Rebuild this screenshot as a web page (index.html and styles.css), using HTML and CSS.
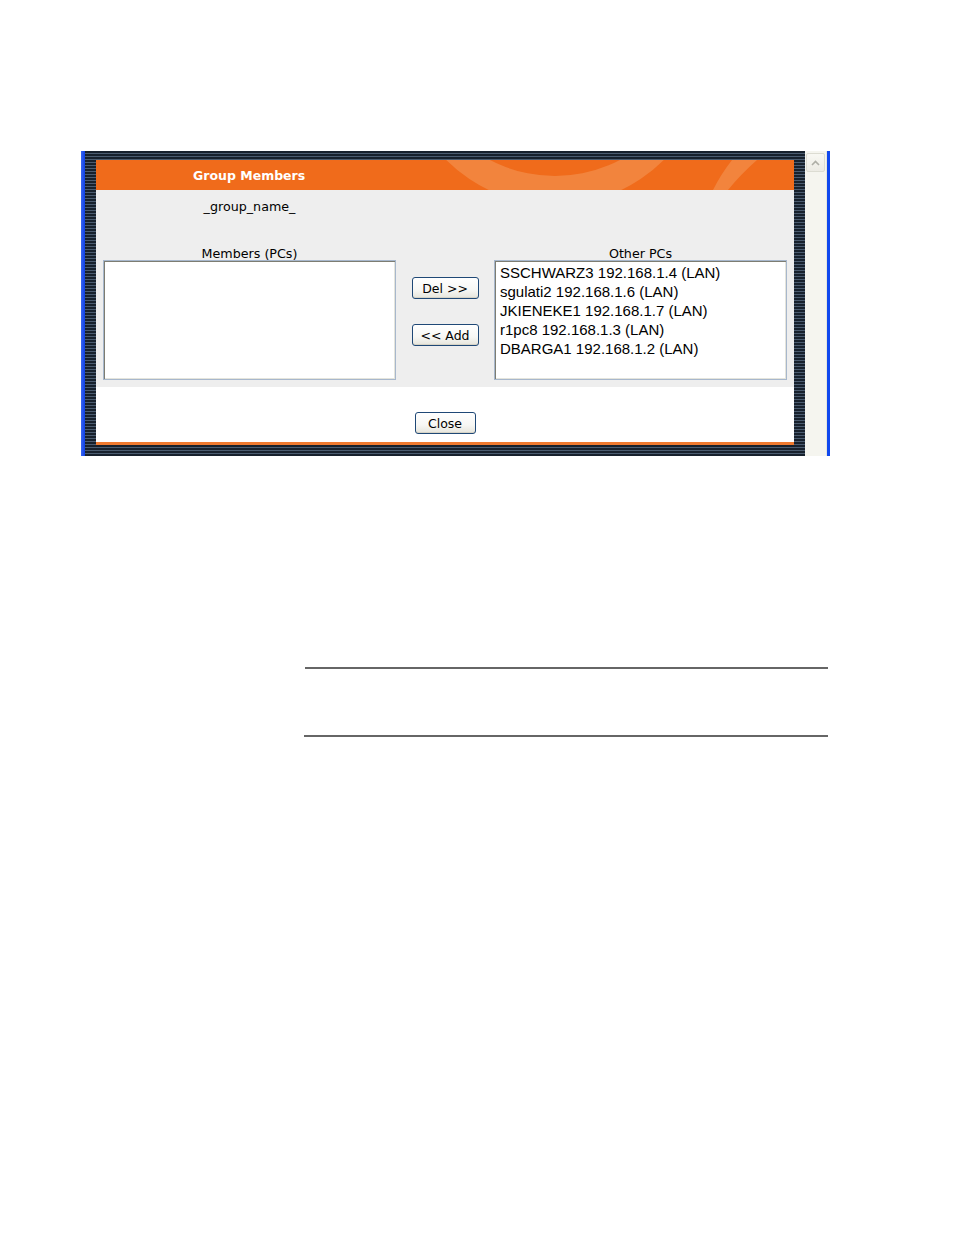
FILE: index.html
```html
<!DOCTYPE html>
<html>
<head>
<meta charset="utf-8">
<link rel="stylesheet" href="styles.css">
</head>
<body>
<div class="shot">
  <div class="blue"></div>
  <div class="stripes">
    <div class="page">
      <div class="header">
        <svg class="deco" width="698" height="30" viewBox="0 0 698 30">
          <path fill="#f2843d" fill-rule="evenodd" d="M305 -109 a154 154 0 1 0 308 0 a154 154 0 1 0 -308 0 Z M319 -124 a140 140 0 1 0 280 0 a140 140 0 1 0 -280 0 Z"/>
          <path fill="#f2843d" d="M636 0 L661 0 Q645 14 632 30 L617 30 Q625 14 636 0 Z"/>
        </svg>
        <span class="title">Group Members</span>
      </div>
      <div class="body">
        <div class="namerow"><div class="col name">_group_name_</div></div>
        <div class="lists">
          <div class="col">
            <div class="label">Members (PCs)</div>
            <div class="listbox"></div>
          </div>
          <div class="mid">
            <button class="btn move">Del &gt;&gt;</button>
            <button class="btn move">&lt;&lt; Add</button>
          </div>
          <div class="col">
            <div class="label">Other PCs</div>
            <div class="listbox">
              <div class="item">SSCHWARZ3 192.168.1.4 (LAN)</div>
              <div class="item">sgulati2 192.168.1.6 (LAN)</div>
              <div class="item">JKIENEKE1 192.168.1.7 (LAN)</div>
              <div class="item">r1pc8 192.168.1.3 (LAN)</div>
              <div class="item">DBARGA1 192.168.1.2 (LAN)</div>
            </div>
          </div>
        </div>
      </div>
      <div class="foot"><button class="btn close">Close</button></div>
      <div class="orange-line"></div>
    </div>
  </div>
  <div class="scrollbar">
    <div class="sb-btn">
      <svg width="9" height="6" viewBox="0 0 9 6"><path d="M1 5 L4.5 1.5 L8 5" fill="none" stroke="#aeaea6" stroke-width="1.6"/></svg>
    </div>
  </div>
  <div class="blue right"></div>
</div>
<div class="rule r1"></div>
<div class="rule r2"></div>
</body>
</html>
```
FILE: styles.css
```css
html, body {
  margin: 0;
  padding: 0;
  background: #ffffff;
}
body {
  width: 954px;
  height: 1235px;
  font-family: "DejaVu Sans", Verdana, sans-serif;
}
.shot {
  display: flex;
  margin: 151px 0 0 81px;
  width: 749px;
  height: 305px;
}
.blue {
  width: 4px;
  background: linear-gradient(to right, #3a66f0, #0c3fe8);
}
.blue.right {
  width: 3px;
  background: #1048ee;
}
.stripes {
  width: 698px;
  padding: 9px 11px 11px 11px;
  background: repeating-linear-gradient(to bottom, #17212d 0px, #17212d 2px, #4b5c70 2px, #4b5c70 3px);
}
.page {
  width: 698px;
  height: 285px;
  display: flex;
  flex-direction: column;
}
.header {
  position: relative;
  height: 30px;
  background: #f06b1b;
  overflow: hidden;
  display: flex;
  align-items: center;
}
.deco {
  position: absolute;
  left: 0;
  top: 0;
}
.title {
  position: relative;
  padding-left: 97px;
  color: #ffffff;
  font-weight: bold;
  font-size: 12.5px;
  margin-top: 1px;
}
.body {
  height: 197px;
  background: #eeeeee;
  box-sizing: border-box;
  padding: 8px 7px 7px 7px;
  font-size: 12.7px;
  color: #000;
}
.namerow {
  display: flex;
  height: 16px;
  line-height: 18px;
}
.col {
  width: 293px;
  display: flex;
  flex-direction: column;
  align-items: center;
}
.name {
  text-align: center;
}
.lists {
  display: flex;
  margin-top: 30px;
}
.label {
  height: 16px;
  line-height: 19px;
  text-align: center;
}
.listbox {
  width: 293px;
  height: 120px;
  box-sizing: border-box;
  background: #ffffff;
  border: 1px solid #a7b7cc;
  box-shadow: inset 1px 1px 0 #7d7d72, inset -1px -1px 0 #e4e4dc;
  padding: 2px 4px 2px 5px;
  align-self: stretch;
  font-family: "Liberation Sans", Arial, sans-serif;
  font-size: 15px;
  line-height: 19px;
}
.item {
  white-space: nowrap;
}
.mid {
  width: 98px;
  display: flex;
  flex-direction: column;
  align-items: center;
  padding-top: 33px;
  gap: 25px;
}
.btn {
  height: 22px;
  box-sizing: border-box;
  border: 1px solid #1f4876;
  border-radius: 3px;
  background: linear-gradient(to bottom, #ffffff 0%, #f7f7f4 60%, #e6e5dc 100%);
  box-shadow: inset 0 -1px 0 #d6d3c6;
  font-family: "DejaVu Sans", Verdana, sans-serif;
  font-size: 12.5px;
  color: #000;
  padding: 0;
  line-height: 19px;
}
.move {
  width: 67px;
}
.close {
  width: 61px;
}
.foot {
  height: 55px;
  background: #ffffff;
  display: flex;
  justify-content: center;
  padding-top: 25px;
  box-sizing: border-box;
}
.orange-line {
  height: 3px;
  background: #ef7a30;
}
.scrollbar {
  width: 22px;
  background: #f5f5ef;
  border-right: 1px solid #e6e6de;
  box-sizing: border-box;
  padding: 2px 0 0 1px;
}
.sb-btn {
  width: 19px;
  height: 19px;
  box-sizing: border-box;
  border: 1px solid #dcdcd2;
  border-radius: 2px;
  background: linear-gradient(to bottom, #f8f8f3, #ecebe4);
  display: flex;
  align-items: center;
  justify-content: center;
}
.rule {
  height: 2px;
  background: #666666;
}
.r1 {
  margin: 211px 0 0 305px;
  width: 523px;
}
.r2 {
  margin: 66px 0 0 304px;
  width: 524px;
}
```
